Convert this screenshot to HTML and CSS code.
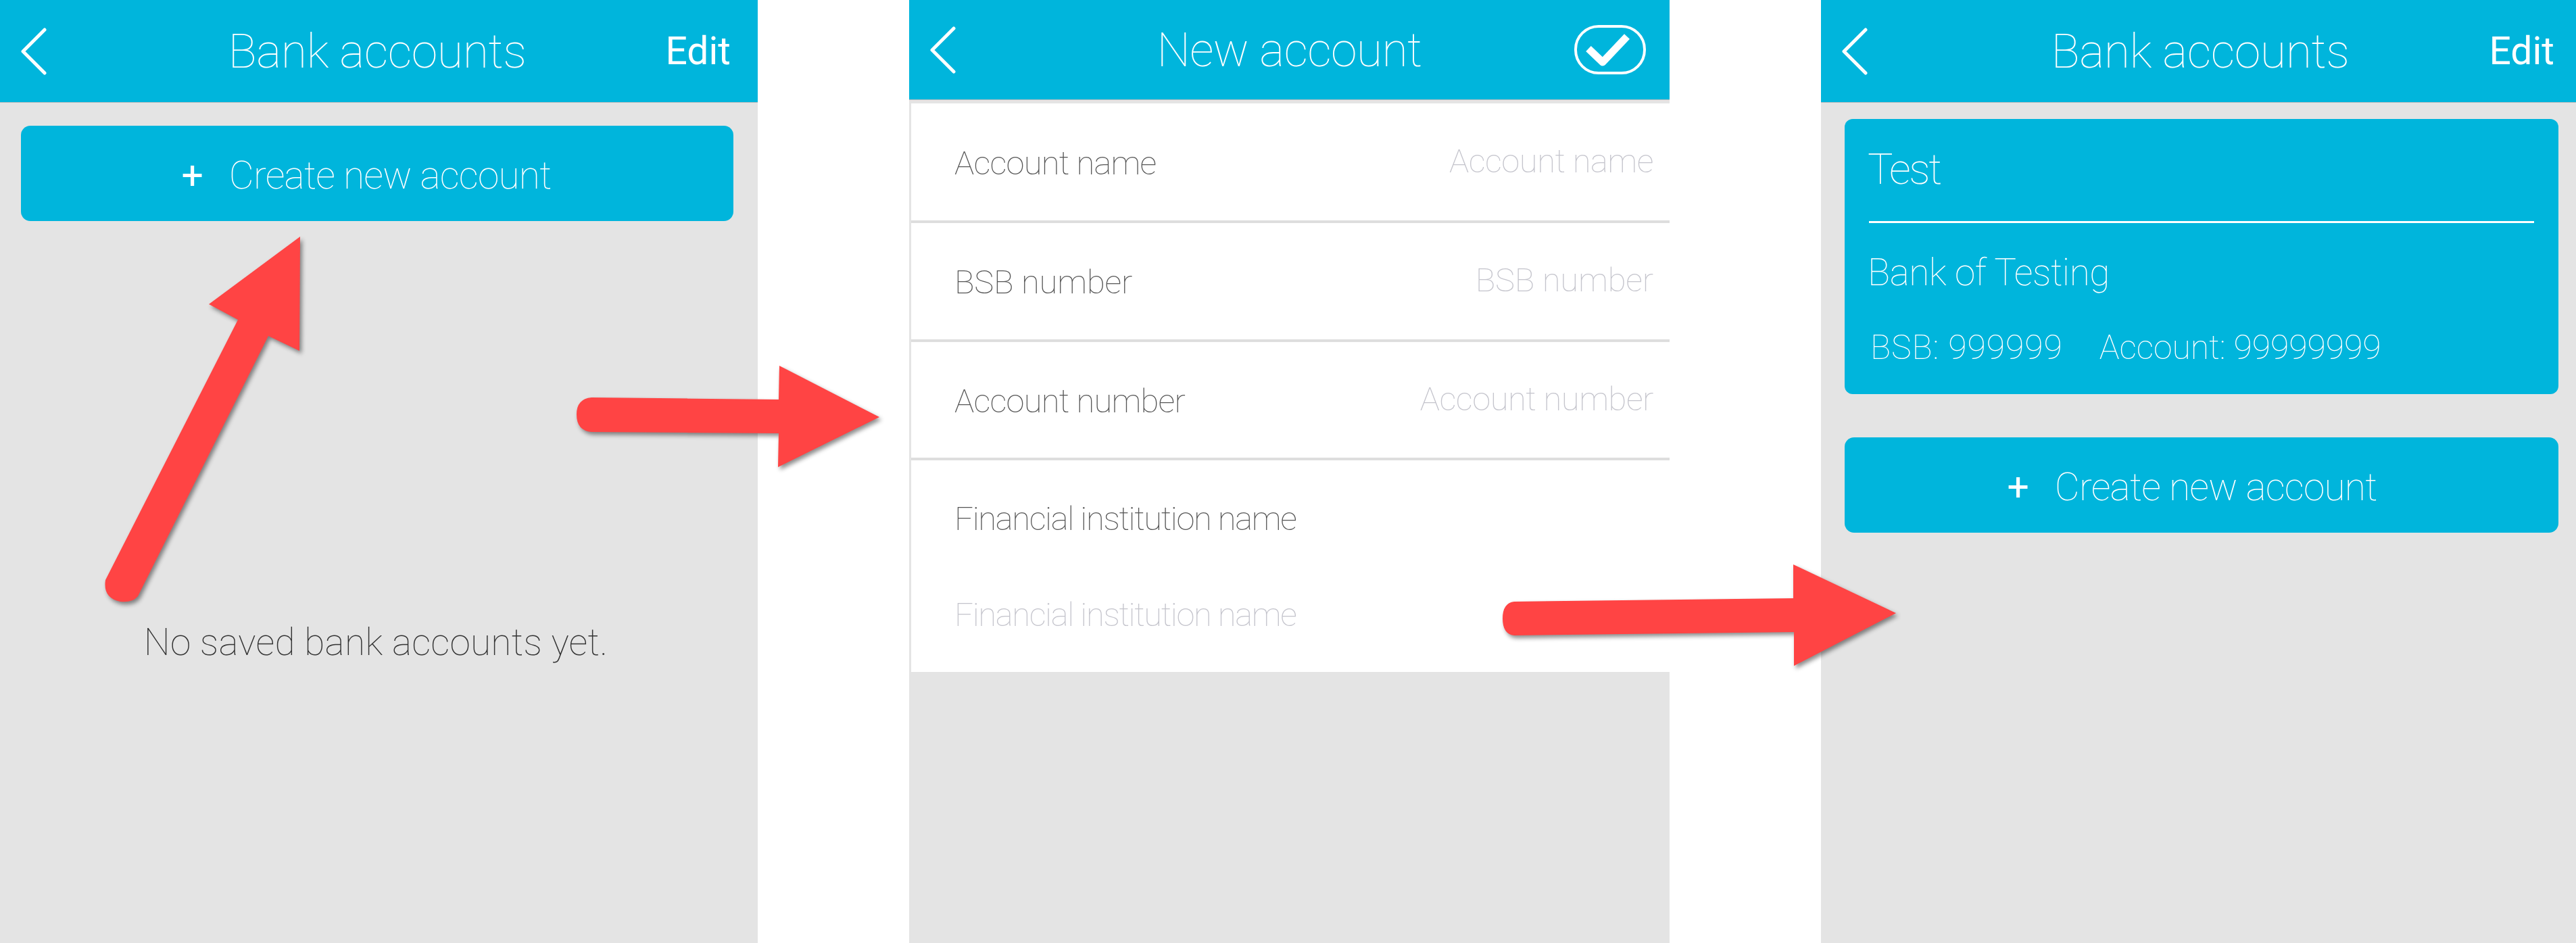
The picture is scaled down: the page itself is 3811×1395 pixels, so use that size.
FILE: index.html
```html
<!DOCTYPE html>
<html lang="en">
<head>
    <meta charset="UTF-8">
    <title>Bank accounts</title>
    <link rel="stylesheet" href="styles.css">
</head>
<body>
    <div class="page">
        <!-- step 1: empty list -->
        <section class="phone phone-first">
            <header class="topbar">
                <svg class="back" viewBox="0 0 40 70"><path d="M36 3 L4 35 L36 67" /></svg>
                <h1 class="title">Bank accounts</h1>
                <a class="edit">Edit</a>
            </header>
            <div class="content">
                <button class="create"><span class="plus">+</span>Create new account</button>
                <p class="empty">No saved bank accounts yet.</p>
            </div>
        </section>

        <!-- step 2: form -->
        <section class="phone phone-form">
            <header class="topbar">
                <svg class="back" viewBox="0 0 40 70"><path d="M36 3 L4 35 L36 67" /></svg>
                <h1 class="title">New account</h1>
                <svg class="done" viewBox="0 0 106 73">
                    <rect x="2" y="2" width="102" height="69" rx="34" />
                    <path d="M21 35 L42 55 L78 17" />
                </svg>
            </header>
            <div class="form">
                <div class="row"><span class="label">Account name</span><span class="hint">Account name</span></div>
                <div class="row row-short"><span class="label">BSB number</span><span class="hint">BSB number</span></div>
                <div class="row"><span class="label">Account number</span><span class="hint">Account number</span></div>
                <div class="row-stack">
                    <span class="label">Financial institution name</span>
                    <span class="hint">Financial institution name</span>
                </div>
            </div>
        </section>

        <!-- step 3: saved account -->
        <section class="phone phone-last">
            <header class="topbar">
                <svg class="back" viewBox="0 0 40 70"><path d="M36 3 L4 35 L36 67" /></svg>
                <h1 class="title">Bank accounts</h1>
                <a class="edit">Edit</a>
            </header>
            <div class="content">
                <div class="card">
                    <div class="card-name">Test</div>
                    <div class="card-bank">Bank of Testing</div>
                    <div class="card-nums"><span class="card-bsb">BSB: 999999</span><span>Account: 99999999</span></div>
                </div>
                <button class="create"><span class="plus">+</span>Create new account</button>
            </div>
        </section>

        <svg class="arrows" viewBox="0 0 3811 1395">
            <path d="M444 350 L309 450 L352 473 L156 858 Q152 885 178 890 Q196 892 204 882 L397 497 L443 519 Z" />
            <path d="M875 588 L1152 591 L1153 541 L1301 617 L1151 691 L1152 641 L875 639 Q853 637 853 613 Q853 590 875 588 Z" />
            <path d="M2240 890 L2653 885 L2653 835 L2805 907 L2654 985 L2654 935 L2240 940 Q2223 938 2223 915 Q2223 892 2240 890 Z" />
        </svg>
    </div>
</body>
</html>
```

FILE: styles.css
```css
body {
    margin: 0;
    background: #fff;
    font-family: 'Roboto', 'Liberation Sans', sans-serif;
    font-weight: 100;
}

.page {
    position: relative;
    display: flex;
    gap: 224px;
    height: 1395px;
    overflow: hidden;
}

.phone {
    display: flex;
    flex-direction: column;
    height: 1395px;
    background: #e4e4e4;
}

.phone-first { width: 1121px; }
.phone-form { width: 1125px; }
.phone-last { width: 1117px; }

.topbar {
    display: grid;
    grid-template-columns: 1fr auto 1fr;
    align-items: center;
    height: 151px;
    padding: 0 30px;
    background: #00b5dc;
    border-bottom: 1px solid #b5bcbe;
    color: #fff;
}

.phone-form .topbar { height: 147px; }

.back {
    width: 40px;
    height: 70px;
    fill: none;
    stroke: #fff;
    stroke-width: 5;
    stroke-linecap: round;
    stroke-linejoin: round;
}

.title {
    margin: 0;
    font-size: 70px;
    font-weight: 100;
    line-height: 1;
    letter-spacing: -.5px;
}

.phone-first .title { margin-right: 5px; }
.phone-last .title { margin-left: 5px; }
.phone-form .title { letter-spacing: -.7px; }

.edit {
    justify-self: end;
    font-size: 57px;
    font-weight: 400;
}

.phone-first .edit { margin-right: 10px; }
.phone-last .edit { margin-right: 2px; }

.done {
    justify-self: end;
    width: 106px;
    height: 73px;
    margin-right: 5px;
    fill: none;
    stroke: #fff;
}

.done rect { stroke-width: 4; }

.done path {
    stroke-width: 11;
    stroke-linejoin: round;
}

.content {
    display: flex;
    flex-direction: column;
}

.create {
    display: flex;
    align-items: center;
    justify-content: center;
    height: 141px;
    padding: 5px 32px 0 0;
    border: none;
    border-radius: 14px;
    background: #00b5dc;
    color: #fff;
    font-family: inherit;
    font-size: 57px;
    font-weight: 100;
    letter-spacing: -.8px;
}

.plus {
    margin-right: 38px;
    font-weight: 400;
    letter-spacing: 0;
}

.phone-first .content { padding: 34px 36px 0 31px; }

.empty {
    margin: 0;
    padding: 591px 4px 0 0;
    color: #333;
    font-size: 55px;
    line-height: 64px;
    letter-spacing: .25px;
    text-align: center;
}

.phone-last .content { padding: 24px 26px 0 35px; }

.phone-last .create {
    margin-top: 64px;
    padding-right: 28px;
}

.card {
    height: 407px;
    padding: 0 36px;
    box-sizing: border-box;
    border-radius: 12px;
    background: #00b5dc;
    color: #fff;
}

.card-name {
    height: 151px;
    border-bottom: 3px solid #fff;
    font-size: 63px;
    line-height: 150px;
    letter-spacing: -2.5px;
    text-indent: -2px;
}

.card-bank {
    margin-top: 40px;
    font-size: 55px;
    line-height: 66px;
    letter-spacing: -.5px;
    text-indent: -2px;
}

.card-nums {
    display: flex;
    gap: 54px;
    margin-top: 50px;
    padding-left: 2px;
    font-size: 50px;
    line-height: 56px;
    letter-spacing: -.1px;
}

.card-bsb { letter-spacing: .9px; }

.form {
    margin-top: 5px;
    border-left: 3px solid #e4e4e4;
    background: #fff;
}

.row {
    display: flex;
    align-items: center;
    justify-content: space-between;
    box-sizing: border-box;
    height: 175px;
    padding: 4px 24px 0 64px;
    border-bottom: 4px solid #dedede;
}

.row:first-child { height: 177px; }
.row-short { height: 176px; }

.row-stack {
    display: flex;
    flex-direction: column;
    gap: 84px;
    height: 313px;
    box-sizing: border-box;
    padding: 58px 64px 0;
}

.label {
    color: #555;
    font-size: 49px;
    line-height: 58px;
    letter-spacing: -.8px;
}

.hint {
    margin-bottom: 6px;
    color: #c4c4cc;
    font-size: 49px;
    line-height: 58px;
    letter-spacing: -.5px;
}

.row-stack .label,
.row-stack .hint {
    margin-bottom: 0;
    letter-spacing: -1.4px;
}

.row-short .label,
.row-short .hint { letter-spacing: -.2px; }

.arrows {
    position: absolute;
    top: 0;
    left: 0;
    width: 3811px;
    height: 1395px;
    fill: #ff4444;
    filter: drop-shadow(3px 4px 3px rgba(0, 0, 0, .45));
    pointer-events: none;
}
```
